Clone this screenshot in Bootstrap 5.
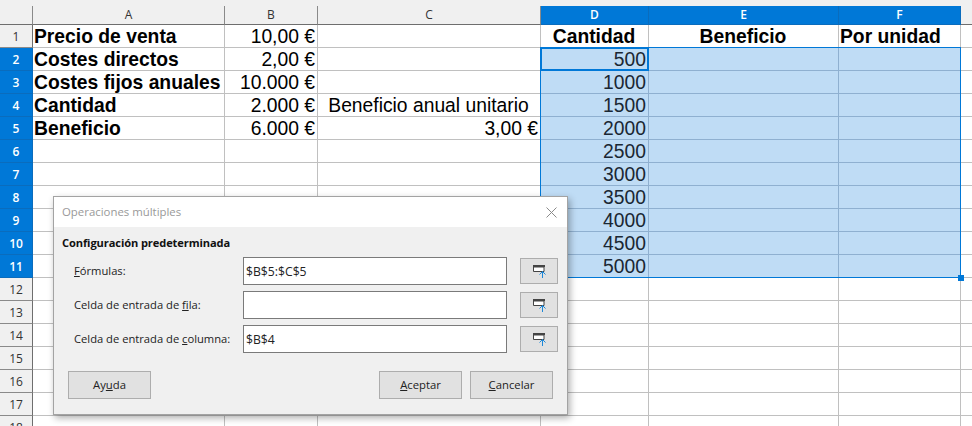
<!DOCTYPE html>
<html lang="es">
<head>
<meta charset="utf-8">
<title>Operaciones múltiples</title>
<link href="https://cdn.jsdelivr.net/npm/bootstrap@5.3.0/dist/css/bootstrap.min.css" rel="stylesheet">
<style>
html,body{height:100%}
body{margin:0;overflow:hidden;background:#fff;font-family:"Liberation Sans",Arial,sans-serif}
.stage{position:relative;width:972px;height:426px;overflow:hidden;padding-top:6px;background:#f0f0f0}
.sheet{table-layout:fixed;width:972px;border-collapse:separate;border-spacing:0;background:#fff;color:#000;font-size:19.3px;line-height:20px}
.sheet th,.sheet td{height:23px;padding:2px 2px 0 1px;border-right:1px solid #c0c0c0;border-bottom:1px solid #c0c0c0;white-space:nowrap;overflow:hidden;font-weight:400}
.sheet td:last-child,.sheet th:last-child{border-right:0}
.sheet thead th{height:19px;background:#f0f0f0;font:12px/18px "Open Sans",sans-serif;color:#333;text-align:center;padding:0;border-right-color:#8a8a8a;border-bottom-color:#6e6e6e}
.sheet tbody th{background:#f0f0f0;font:12px/20px "Open Sans",sans-serif;color:#333;text-align:center;padding:2px 0 0;border-right-color:#6e6e6e;border-bottom-color:#8a8a8a}
.sheet thead th.hsel,.sheet tbody th.hsel{background:#0078d7;color:#fff;border-color:#0a6cbd;font-weight:600}
.sheet td.fx{background:#bfdcf5;border-color:#8fb0d0;color:#1a2733}
.sheet td.nr{text-align:right;overflow:visible}
.sheet td.nc{text-align:center}
.sheet td.nb{font-weight:700}
.selbox{position:absolute;left:540px;top:47px;width:421px;height:231px;border:1px solid #0078d7;pointer-events:none}
.curcell{position:absolute;left:540px;top:47px;width:109px;height:24px;border:2px solid #0078d7}
.grip{position:absolute;left:958px;top:275px;width:6px;height:6px;background:#0078d7}
.dlg{position:absolute;left:53px;top:196px;width:515px;height:219px;background:#f0f0f0;border:1px solid #a3a3a3;box-shadow:2px 3px 7px rgba(0,0,0,.32);font-family:"Open Sans",sans-serif;font-size:11.2px;color:#222}
.dlg-title{height:30px;background:#fff;padding:0 10px 0 8px;color:#999;font-size:11.4px}
.dlg-body{padding:6px 9px 0 8px}
.dlg-legend{font-weight:700;color:#111;font-size:11.1px;line-height:20px;margin-bottom:4px;letter-spacing:-.1px}
.dlg-row{height:28px;margin-bottom:6px;padding-left:12px}
.dlg-label{width:169px;flex:none}
.dlg .form-control.dlg-input{width:264px;height:28px;flex:none;padding:0 2px;border:1px solid #7a7a7a;border-radius:0;font-size:12.2px;color:#222;background:#fff;box-shadow:none}
.dlg .btn.dlg-pick{width:38px;height:26px;flex:none;margin-left:13px;padding:0;background:#e1e1e1;border:1px solid #adadad;border-radius:0}
.dlg .btn.dlg-act{width:83px;height:28px;padding:0;background:#e1e1e1;border:1px solid #adadad;border-radius:0;font-size:11.3px;color:#222}
.dlg-foot{margin:18px 5px 0 6px}
</style>
</head>
<body>
<div class="stage">
<table class="sheet">
<colgroup><col style="width:33px"><col style="width:192px"><col style="width:93px"><col style="width:223px"><col style="width:108px"><col style="width:190px"><col style="width:122px"><col></colgroup>
<thead><tr><th></th><th>A</th><th>B</th><th>C</th><th class="hsel">D</th><th class="hsel">E</th><th class="hsel">F</th><th></th></tr></thead>
<tbody>
<tr><th>1</th><td class="nb">Precio de venta</td><td class="nr">10,00 €</td><td></td><td class="nb nc">Cantidad</td><td class="nb nc">Beneficio</td><td class="nb">Por unidad</td><td></td></tr>
<tr><th class="hsel">2</th><td class="nb">Costes directos</td><td class="nr">2,00 €</td><td></td><td class="fx nr">500</td><td class="fx"></td><td class="fx"></td><td></td></tr>
<tr><th class="hsel">3</th><td class="nb">Costes fijos anuales</td><td class="nr">10.000 €</td><td></td><td class="fx nr">1000</td><td class="fx"></td><td class="fx"></td><td></td></tr>
<tr><th class="hsel">4</th><td class="nb">Cantidad</td><td class="nr">2.000 €</td><td class="nc">Beneficio anual unitario</td><td class="fx nr">1500</td><td class="fx"></td><td class="fx"></td><td></td></tr>
<tr><th class="hsel">5</th><td class="nb">Beneficio</td><td class="nr">6.000 €</td><td class="nr">3,00 €</td><td class="fx nr">2000</td><td class="fx"></td><td class="fx"></td><td></td></tr>
<tr><th class="hsel">6</th><td></td><td></td><td></td><td class="fx nr">2500</td><td class="fx"></td><td class="fx"></td><td></td></tr>
<tr><th class="hsel">7</th><td></td><td></td><td></td><td class="fx nr">3000</td><td class="fx"></td><td class="fx"></td><td></td></tr>
<tr><th class="hsel">8</th><td></td><td></td><td></td><td class="fx nr">3500</td><td class="fx"></td><td class="fx"></td><td></td></tr>
<tr><th class="hsel">9</th><td></td><td></td><td></td><td class="fx nr">4000</td><td class="fx"></td><td class="fx"></td><td></td></tr>
<tr><th class="hsel">10</th><td></td><td></td><td></td><td class="fx nr">4500</td><td class="fx"></td><td class="fx"></td><td></td></tr>
<tr><th class="hsel">11</th><td></td><td></td><td></td><td class="fx nr">5000</td><td class="fx"></td><td class="fx"></td><td></td></tr>
<tr><th>12</th><td></td><td></td><td></td><td></td><td></td><td></td><td></td></tr>
<tr><th>13</th><td></td><td></td><td></td><td></td><td></td><td></td><td></td></tr>
<tr><th>14</th><td></td><td></td><td></td><td></td><td></td><td></td><td></td></tr>
<tr><th>15</th><td></td><td></td><td></td><td></td><td></td><td></td><td></td></tr>
<tr><th>16</th><td></td><td></td><td></td><td></td><td></td><td></td><td></td></tr>
<tr><th>17</th><td></td><td></td><td></td><td></td><td></td><td></td><td></td></tr>
<tr><th>18</th><td></td><td></td><td></td><td></td><td></td><td></td><td></td></tr>
</tbody>
</table>
<div class="selbox"></div>
<div class="curcell"></div>
<div class="grip"></div>

<div class="dlg" role="dialog" aria-label="Operaciones múltiples">
  <div class="dlg-title d-flex align-items-center justify-content-between">
    <span>Operaciones múltiples</span>
    <svg width="11" height="11" viewBox="0 0 11 11" aria-hidden="true"><path d="M.5.5l10 10M10.5.5l-10 10" stroke="#8a8a8a" stroke-width="1" fill="none"/></svg>
  </div>
  <div class="dlg-body">
    <div class="dlg-legend">Configuración predeterminada</div>
    <div class="dlg-row d-flex align-items-center">
      <label class="dlg-label"><u>F</u>órmulas:</label>
      <input class="form-control dlg-input" value="$B$5:$C$5">
      <button class="btn dlg-pick d-flex align-items-center justify-content-center" type="button" aria-label="Reducir">
        <svg width="14" height="14" viewBox="0 0 14 14"><rect x="1" y="1" width="12" height="2" fill="#444"/><path d="M1.5 3v4.5h10.5V3z" fill="#fff" stroke="#444"/><path d="M7 11l3.5-3.5 3.5 3.5" fill="#e1e1e1"/><path d="M10.5 14V7.5M7.5 10.5l3-3 3 3" stroke="#1e88d8" stroke-width="1" fill="none"/></svg>
      </button>
    </div>
    <div class="dlg-row d-flex align-items-center">
      <label class="dlg-label">Celda de entrada de <u>f</u>ila:</label>
      <input class="form-control dlg-input" value="">
      <button class="btn dlg-pick d-flex align-items-center justify-content-center" type="button" aria-label="Reducir">
        <svg width="14" height="14" viewBox="0 0 14 14"><rect x="1" y="1" width="12" height="2" fill="#444"/><path d="M1.5 3v4.5h10.5V3z" fill="#fff" stroke="#444"/><path d="M7 11l3.5-3.5 3.5 3.5" fill="#e1e1e1"/><path d="M10.5 14V7.5M7.5 10.5l3-3 3 3" stroke="#1e88d8" stroke-width="1" fill="none"/></svg>
      </button>
    </div>
    <div class="dlg-row d-flex align-items-center">
      <label class="dlg-label">Celda de entrada de <u>c</u>olumna:</label>
      <input class="form-control dlg-input" value="$B$4">
      <button class="btn dlg-pick d-flex align-items-center justify-content-center" type="button" aria-label="Reducir">
        <svg width="14" height="14" viewBox="0 0 14 14"><rect x="1" y="1" width="12" height="2" fill="#444"/><path d="M1.5 3v4.5h10.5V3z" fill="#fff" stroke="#444"/><path d="M7 11l3.5-3.5 3.5 3.5" fill="#e1e1e1"/><path d="M10.5 14V7.5M7.5 10.5l3-3 3 3" stroke="#1e88d8" stroke-width="1" fill="none"/></svg>
      </button>
    </div>
    <div class="dlg-foot d-flex">
      <button class="btn dlg-act" type="button">Ay<u>u</u>da</button>
      <button class="btn dlg-act ms-auto me-2" type="button"><u>A</u>ceptar</button>
      <button class="btn dlg-act" type="button"><u>C</u>ancelar</button>
    </div>
  </div>
</div>
</div>
<script src="https://cdn.jsdelivr.net/npm/bootstrap@5.3.0/dist/js/bootstrap.bundle.min.js"></script>
</body>
</html>
